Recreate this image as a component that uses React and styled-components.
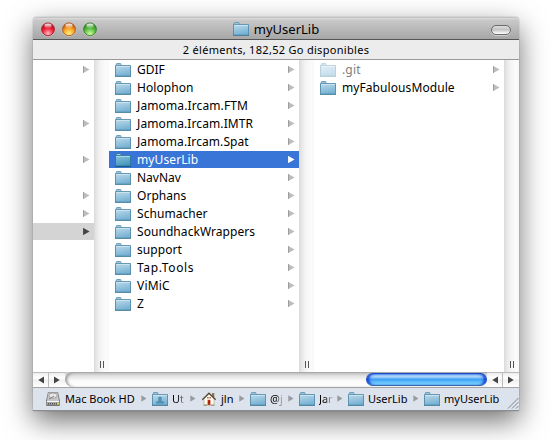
import React from "react";
import styled, { createGlobalStyle, css } from "styled-components";

const Global = createGlobalStyle`
  *{box-sizing:border-box}
  html,body{margin:0;background:#fff;overflow:hidden}
  body{font-family:"Noto Sans","Open Sans",sans-serif;font-size:12px;color:#000}
  svg{display:block;flex:none}
`;

const Desktop = styled.main`
  width: 552px;
  height: 440px;
  padding: 17px 33px 29px;
  overflow: hidden;
  background: #fff;
`;
const Window = styled.section`
  width: 486px;
  height: 394px;
  display: flex;
  flex-direction: column;
  border-radius: 4px 4px 0 0;
  box-shadow: 0 0 1px rgba(0,0,0,.65), 0 10px 28px rgba(0,0,0,.56);
`;
const TitleBar = styled.header`
  height: 23px;
  display: grid;
  grid-template-columns: 80px 1fr 80px;
  align-items: center;
  padding: 2px 8px 0;
  border-radius: 4px 4px 0 0;
  border-bottom: 1px solid #555;
  background: linear-gradient(#aaa 0, #dcdcdc 1px, #c9c9c9 3px, #a6a6a6 22px);
`;
const Lights = styled.div`
  display: flex;
  gap: 7px;
`;
const Title = styled.h1`
  margin: 0 0 1px;
  display: flex;
  align-items: center;
  justify-content: center;
  gap: 5px;
  font-size: 13px;
  font-weight: 400;
  line-height: 20px;
  letter-spacing: 0;
  white-space: nowrap;
`;
const Pill = styled.button`
  justify-self: end;
  width: 20px;
  height: 10px;
  padding: 0;
  border: 1px solid #6c6c6c;
  border-radius: 5px;
  background: linear-gradient(#ddd, #c4c4c4 45%, #fff);
  box-shadow: 0 1px 0 rgba(255,255,255,.4);
`;
const Status = styled.div`
  height: 20px;
  border-bottom: 1px solid #999;
  background: #ececec;
  font-size: 11px;
  line-height: 20px;
  text-align: center;
  letter-spacing: 0.3px;
`;
const Browser = styled.div`
  height: 312px;
  display: flex;
  background: #fff;
`;
const Column = styled.ul`
  width: ${(p) => p.$w}px;
  margin: 0;
  padding: 0;
  list-style: none;
`;
const Row = styled.li`
  height: 18px;
  display: flex;
  align-items: center;
  gap: 6px;
  padding: 1px 4px 0 6px;
  line-height: 17px;
  white-space: nowrap;
  ${(p) => p.$state === "selected" && css`background: linear-gradient(#fff 1px, #3875d7 1px); color: #fff;`}
  ${(p) => p.$state === "path" && css`background: linear-gradient(#fff 1px, #d4d4d4 1px);`}
`;
const Name = styled.span`
  flex: 1;
  letter-spacing: ${(p) => p.$ls || 0}px;
  color: ${(p) => (p.$dim ? "#808080" : "inherit")};
`;
const Gutter = styled.div`
  width: 15px;
  display: flex;
  align-items: flex-end;
  justify-content: center;
  padding-bottom: 4px;
  background: linear-gradient(90deg, #dadada, #e9e9e9 3px, #f5f5f5 7px, #fbfbfb 12px, #f8f8f8);
`;
const Grip = styled.i`
  width: 4px;
  height: 7px;
  border: solid #555;
  border-width: 0 1px;
`;
const ScrollBar = styled.div`
  height: 15px;
  display: flex;
  background: linear-gradient(#c2c2c2, #dedede 3px, #fafafa 9px, #fff);
`;
const ArrowButton = styled.button`
  width: 16px;
  padding: 0;
  border: 0;
  border-top: 1px solid #bbb;
  border-right: ${(p) => (p.$divide ? "1px solid #bbb" : "0")};
  display: grid;
  place-items: center;
  background: linear-gradient(#ededed, #fff 5px, #f0f0f0 7px, #fff);
`;
const Track = styled.div`
  flex: 1;
  display: flex;
  justify-content: flex-end;
  border-radius: 8px 0 0 8px;
  border-top: 1px solid #aaa;
  box-shadow: inset 3px 0 3px -1px #999;
  background: linear-gradient(#c6c6c6, #e2e2e2 3px, #fbfbfb 8px, #fff);
`;
const Thumb = styled.div`
  width: 121px;
  height: 13px;
  border-radius: 7px;
  border: 1px solid #1c49c8;
  border-bottom-color: #3568a8;
  background: linear-gradient(#6fb0f5, #b4d9fc 2px, #86c3fa 4px, #3d9ef6 5px, #52b0fa 7px, #8ce4ff 11px);
  box-shadow: inset 3px 0 3px -1px #0b3cd0, inset -3px 0 3px -1px #0b3cd0;
`;
const PathBar = styled.footer`
  height: 24px;
  display: flex;
  align-items: center;
  padding: 0 0 1px 12px;
  border-top: 1px solid #a3a3a3;
  border-bottom: 1px solid #8a8d92;
  background: #dde3ec;
  font-size: 11px;
`;
const Crumb = styled.div`
  display: flex;
  align-items: center;
`;
const CrumbLabel = styled.span`
  width: ${(p) => p.$w}px;
  margin-left: 4px;
  line-height: 18px;
  white-space: nowrap;
  letter-spacing: ${(p) => p.$ls || 0}px;
  ${(p) => p.$fade && css`
    padding-right: 2px;
    margin-right: -2px;
    mask-image: linear-gradient(90deg, #000 40%, rgba(0,0,0,.25) 85%);
  `}
`;
const Separator = styled.span`
  width: 17px;
  padding-left: 6px;
`;
const Resize = styled.span`
  margin-left: auto;
  align-self: flex-end;
`;

function Folder({ tone = "normal", person }) {
  const dark = tone === "selected";
  return (
    <svg width="16" height="14" viewBox="0 0 16 14" opacity={tone === "dim" ? 0.42 : 1}>
      <defs>
        <linearGradient id={"f" + tone} x1="0" y1="0" x2=".3" y2="1">
          <stop offset="0" stopColor={dark ? "#8fc3dc" : "#bedbeb"} />
          <stop offset="1" stopColor={dark ? "#4599bd" : "#78b2d3"} />
        </linearGradient>
      </defs>
      <path d="M1.3 3.5V1.3Q1.3 .5 2.1 .5H5.2Q6 .5 6 1.3V3.5z" fill={dark ? "#a5d3e7" : "#9cc6dc"} stroke={dark ? "#2d7397" : "#6496b1"} strokeWidth=".9" />
      <path d="M.5 2.5H15.5V13H.5z" fill={`url(#f${tone})`} />
      <path d="M.5 13V2.5H15.5V13" fill="none" stroke={dark ? "#2f7a9f" : "#5c92af"} strokeWidth="1" />
      <path d="M1 3.4H15" stroke={dark ? "#b5dcee" : "#d4e7f1"} strokeWidth=".9" />
      <path d="M0 13.3H16" stroke={dark ? "#1b587a" : "#3a7998"} strokeWidth="1.1" />
      {person && <path d="M8 4.6a2 2 0 0 1 1.1 3.6L12 9.9v1.6H4V9.9l2.9-1.7A2 2 0 0 1 8 4.6z" fill="#4f90b3" />}
    </svg>
  );
}

const tones = { normal: ["#bdbdbd", "#8e8e8e"], path: ["#444", "#444"], selected: ["#fff", "#fff"] };
function Disclosure({ tone = "normal" }) {
  const [fill, edge] = tones[tone];
  return (
    <svg width="7" height="7" viewBox="0 0 7 7">
      <path d="M.4 .1L6.6 3.5L.4 6.9z" fill={fill} />
      <path d="M.5 .1V6.9" stroke={edge} strokeWidth=".8" />
    </svg>
  );
}
function ScrollArrow({ left }) {
  return (
    <svg width="6" height="8" viewBox="0 0 6 8">
      <path d={left ? "M6 .5V7.5L.3 4z" : "M0 .5V7.5L5.7 4z"} fill="#444" />
    </svg>
  );
}
function Light({ id, edge, mid, low }) {
  return (
    <svg width="14" height="15" viewBox="0 0 14 15">
      <defs>
        <radialGradient id={id} cx=".5" cy=".85" r=".8">
          <stop offset="0" stopColor={low} />
          <stop offset=".55" stopColor={mid} />
          <stop offset="1" stopColor={edge} />
        </radialGradient>
        <linearGradient id={id + "g"} x1="0" y1="0" x2="0" y2="1">
          <stop offset="0" stopColor="#fff" stopOpacity=".95" />
          <stop offset="1" stopColor="#fff" stopOpacity=".15" />
        </linearGradient>
      </defs>
      <circle cx="7" cy="8" r="6.7" fill="#fff" opacity=".35" />
      <circle cx="7" cy="7.3" r="6.4" fill={`url(#${id})`} stroke={edge} strokeWidth=".8" />
      <ellipse cx="7" cy="3.8" rx="3.6" ry="2.2" fill={`url(#${id}g)`} />
    </svg>
  );
}
function Drive() {
  return (
    <svg width="16" height="16" viewBox="0 0 16 16">
      <path d="M3 1H13L15 10V14Q15 15 14 15H2Q1 15 1 14V10z" fill="#757575" />
      <path d="M3.4 1.5H12.6L14 10H2z" fill="#c6c6c6" />
      <ellipse cx="8" cy="4.6" rx="4" ry="2.6" fill="#e8e8e8" stroke="#8c8c8c" strokeWidth=".7" />
      <path d="M4 8.2L9 5" stroke="#808080" />
      <path d="M1.5 10.3H14.5V13.8H1.5z" fill="#a5a5a5" />
      <path d="M2 10.5H14" stroke="#f7f7f7" />
      <path d="M3 12.8H12" stroke="#333" strokeDasharray="1 1" />
      <path d="M12 12.7H14" stroke="#e3df38" strokeWidth="1.3" />
    </svg>
  );
}
function House() {
  return (
    <svg width="16" height="16" viewBox="0 0 16 16">
      <path d="M11 2H13.3V7H11z" fill="#8a7458" />
      <path d="M3 7.5L8 2.8L13 7.5V14H3z" fill="#fffdf0" stroke="#aaa28c" strokeWidth=".6" />
      <path d="M1.3 8.8L8 2.2L14.7 8.8" fill="none" stroke="#55493a" strokeWidth="1.3" />
      <path d="M6.6 8.8H9.4V14H6.6z" fill="#bd2e16" />
      <path d="M6.3 6H7.5V7.5H6.3zM8.5 6H9.7V7.5H8.5z" fill="#a33b22" />
      <path d="M7.8 10.2H9V12H7.8z" fill="#55251b" />
      <path d="M2.5 14.2H6.2M9.8 14.2H13.5" stroke="#8b8f59" />
    </svg>
  );
}

const projects = [
  ["GDIF", 0], ["Holophon", 0.08], ["Jamoma.Ircam.FTM", 0.12], ["Jamoma.Ircam.IMTR", 0.1], ["Jamoma.Ircam.Spat", 0.08],
  ["myUserLib", 0.1], ["NavNav", 0], ["Orphans", 0.05], ["Schumacher", 0.05], ["SoundhackWrappers", 0.06],
  ["support", 0.08], ["Tap.Tools", 0.65], ["ViMiC", 0.2], ["Z", 0],
];
const parents = [1, 0, 0, 1, 0, 1, 0, 1, 1, 2];
const crumbs = [
  { icon: <Drive />, label: "Mac Book HD", w: 70 },
  { icon: <Folder person />, label: "Ut", w: 14, fade: true },
  { icon: <House />, label: "jln", w: 12 },
  { icon: <Folder />, label: "@j", w: 14, fade: true },
  { icon: <Folder />, label: "Jar", w: 14, fade: true, ls: -0.1 },
  { icon: <Folder />, label: "UserLib", w: 39 },
  { icon: <Folder />, label: "myUserLib", w: 56 },
];

export default function App() {
  return (
    <Desktop>
      <Global />
      <Window>
        <TitleBar>
          <Lights>
            <Light id="close" edge="#a3101e" mid="#f0213c" low="#ffc0c4" />
            <Light id="min" edge="#b04a10" mid="#f8a426" low="#fff37e" />
            <Light id="zoom" edge="#2b7a24" mid="#59bd43" low="#d4fa9e" />
          </Lights>
          <Title><Folder />myUserLib</Title>
          <Pill aria-label="Toolbar" />
        </TitleBar>
        <Status>2 éléments, 182,52 Go disponibles</Status>
        <Browser>
          <Column $w={61}>
            {parents.map((kind, i) => (
              <Row key={i} $state={kind === 2 ? "path" : "normal"}>
                <Name />
                {kind > 0 && <Disclosure tone={kind === 2 ? "path" : "normal"} />}
              </Row>
            ))}
          </Column>
          <Gutter><Grip /></Gutter>
          <Column $w={190}>
            {projects.map(([name, ls]) => {
              const state = name === "myUserLib" ? "selected" : "normal";
              return (
                <Row key={name} $state={state}>
                  <Folder tone={state} />
                  <Name $ls={ls}>{name}</Name>
                  <Disclosure tone={state} />
                </Row>
              );
            })}
          </Column>
          <Gutter><Grip /></Gutter>
          <Column $w={190}>
            <Row><Folder tone="dim" /><Name $dim $ls={0.15}>.git</Name><Disclosure /></Row>
            <Row><Folder /><Name $ls={0.08}>myFabulousModule</Name><Disclosure /></Row>
          </Column>
          <Gutter><Grip /></Gutter>
        </Browser>
        <ScrollBar>
          <ArrowButton $divide aria-label="Left"><ScrollArrow left /></ArrowButton>
          <ArrowButton aria-label="Right"><ScrollArrow /></ArrowButton>
          <Track><Thumb /></Track>
          <ArrowButton $divide aria-label="Left"><ScrollArrow left /></ArrowButton>
          <ArrowButton aria-label="Right"><ScrollArrow /></ArrowButton>
        </ScrollBar>
        <PathBar>
          {crumbs.map((c, i) => (
            <Crumb key={i}>
              {c.icon}
              <CrumbLabel $w={c.w} $fade={c.fade} $ls={c.ls}>{c.label}</CrumbLabel>
              {i < crumbs.length - 1 && (
                <Separator>
                  <svg width="6" height="7" viewBox="0 0 6 7"><path d="M.3 .3L5.5 3.5L.3 6.7z" fill="#989ca2" /></svg>
                </Separator>
              )}
            </Crumb>
          ))}
          <Resize>
            <svg width="12" height="12" viewBox="0 0 12 12"><path d="M1 11.5L11.5 1M5 11.5L11.5 5M9 11.5L11.5 9" stroke="#777c84" strokeWidth=".9" /></svg>
          </Resize>
        </PathBar>
      </Window>
    </Desktop>
  );
}
